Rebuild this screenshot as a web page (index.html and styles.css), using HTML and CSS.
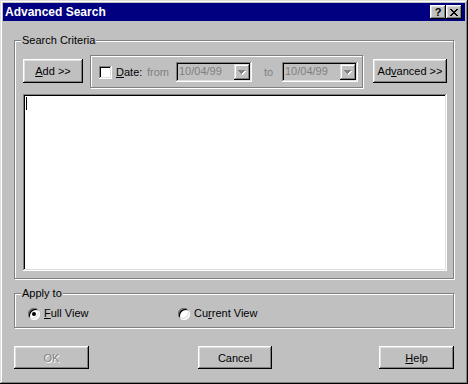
FILE: index.html
```html
<!DOCTYPE html>
<html lang="en">
<head>
    <meta charset="UTF-8">
    <title>Advanced Search</title>
    <link rel="stylesheet" href="styles.css">
</head>
<body>
    <div class="window" role="dialog" aria-label="Advanced Search">
        <!-- Title bar -->
        <div class="titlebar">
            <span class="title">Advanced Search</span>
            <div class="title-buttons">
                <button class="title-btn help-glyph">?</button>
                <button class="title-btn">
                    <svg width="8" height="7" viewBox="0 0 8 7" shape-rendering="crispEdges">
                        <path d="M0 0h2v1H0zM6 0h2v1H6zM1 1h2v1H1zM5 1h2v1H5zM2 2h4v1H2zM3 3h2v1H3zM2 4h4v1H2zM1 5h2v1H1zM5 5h2v1H5zM0 6h2v1H0zM6 6h2v1H6z" fill="#000"/>
                    </svg>
                </button>
            </div>
        </div>

        <div class="client">
            <!-- Search criteria -->
            <div class="group criteria">
                <span class="group-label">Search Criteria</span>
                <div class="criteria-row">
                    <button class="btn btn-add"><u>A</u>dd &gt;&gt;</button>
                    <div class="date-frame">
                        <span class="checkbox"></span>
                        <span class="date-label"><u>D</u>ate:</span>
                        <span class="muted from">from</span>
                        <div class="combo">
                            <span class="combo-text">10/04/99</span>
                            <span class="combo-btn">
                                <svg width="8" height="5" viewBox="0 0 8 5" shape-rendering="crispEdges">
                                    <path d="M1 1h7v1H1zM2 2h5v1H2zM3 3h3v1H3zM4 4h1v1H4z" fill="#fff"/>
                                    <path d="M0 0h7v1H0zM1 1h5v1H1zM2 2h3v1H2zM3 3h1v1H3z" fill="#808080"/>
                                </svg>
                            </span>
                        </div>
                        <span class="muted to">to</span>
                        <div class="combo">
                            <span class="combo-text">10/04/99</span>
                            <span class="combo-btn">
                                <svg width="8" height="5" viewBox="0 0 8 5" shape-rendering="crispEdges">
                                    <path d="M1 1h7v1H1zM2 2h5v1H2zM3 3h3v1H3zM4 4h1v1H4z" fill="#fff"/>
                                    <path d="M0 0h7v1H0zM1 1h5v1H1zM2 2h3v1H2zM3 3h1v1H3z" fill="#808080"/>
                                </svg>
                            </span>
                        </div>
                    </div>
                    <button class="btn btn-advanced">Ad<u>v</u>anced &gt;&gt;</button>
                </div>
                <div class="query-box"><span class="caret"></span></div>
            </div>

            <!-- Apply to -->
            <div class="group apply">
                <span class="group-label">Apply to</span>
                <div class="radio-row">
                    <label class="option"><span class="radio checked"></span><span><u>F</u>ull View</span></label>
                    <label class="option"><span class="radio"></span><span>Cu<u>r</u>rent View</span></label>
                </div>
            </div>

            <!-- Dialog buttons -->
            <div class="actions">
                <button class="btn btn-ok" disabled>OK</button>
                <button class="btn btn-cancel">Cancel</button>
                <button class="btn btn-help"><u>H</u>elp</button>
            </div>
        </div>
    </div>
</body>
</html>
```

FILE: styles.css
```css
/* Win98 palette */
:root {
    --face: #c0c0c0;
    --light: #dfdfdf;
    --highlight: #ffffff;
    --shadow: #808080;
    --dark: #000000;
    --title: #000080;
}

* {
    margin: 0;
    padding: 0;
    box-sizing: border-box;
}

body {
    font-family: "Liberation Sans", Arial, sans-serif;
    font-size: 11px;
    line-height: 13px;
    color: #000;
    background: var(--face);
}

u {
    text-decoration: underline;
    text-underline-offset: 1px;
}

/* Window frame */
.window {
    width: 468px;
    height: 384px;
    padding: 3px;
    background: var(--face);
    display: flex;
    flex-direction: column;
    box-shadow: inset -1px -1px var(--dark), inset 1px 1px var(--light),
                inset -2px -2px var(--shadow), inset 2px 2px var(--highlight);
}

.titlebar {
    height: 18px;
    background: var(--title);
    display: flex;
    align-items: center;
    justify-content: space-between;
    padding: 0 3px 0 2px;
}

.title {
    color: #fff;
    font-weight: bold;
    font-size: 12px;
}

.title-buttons {
    display: flex;
}

.title-btn {
    width: 16px;
    height: 14px;
    border: none;
    background: var(--face);
    display: flex;
    align-items: center;
    justify-content: center;
    font-family: "Liberation Sans", Arial, sans-serif;
    font-weight: bold;
    font-size: 11px;
    line-height: 11px;
    color: #000;
    box-shadow: inset -1px -1px var(--dark), inset 1px 1px var(--highlight),
                inset -2px -2px var(--shadow), inset 2px 2px var(--light);
}

.help-glyph {
    padding-top: 1px;
}

/* Client area */
.client {
    flex: 1;
    padding: 19px 11px 0 11px;
    display: flex;
    flex-direction: column;
}

.group {
    position: relative;
    border: 1px solid var(--shadow);
    box-shadow: inset 1px 1px var(--highlight), 1px 1px var(--highlight);
}

.group-label {
    position: absolute;
    top: -7px;
    left: 6px;
    padding: 0 1px;
    background: var(--face);
}

.criteria {
    height: 239px;
    padding: 14px 6px 7px 8px;
    display: flex;
    flex-direction: column;
}

.criteria-row {
    display: flex;
    align-items: flex-start;
    height: 33px;
}

/* Push buttons */
.btn {
    height: 23px;
    border: none;
    background: var(--face);
    font-family: "Liberation Sans", Arial, sans-serif;
    font-size: 11px;
    color: #000;
    box-shadow: inset -1px -1px var(--dark), inset 1px 1px var(--highlight),
                inset -2px -2px var(--shadow), inset 2px 2px var(--light);
}

.btn:disabled {
    color: var(--shadow);
    text-shadow: 1px 1px var(--highlight);
}

.btn-add {
    width: 60px;
    height: 24px;
    margin-top: 4px;
}

.btn-advanced {
    width: 74px;
    height: 24px;
    margin-top: 4px;
    margin-left: 10px;
}

/* Date frame */
.date-frame {
    width: 273px;
    height: 33px;
    margin-left: 7px;
    border: 1px solid var(--shadow);
    box-shadow: inset 1px 1px var(--highlight), 1px 1px var(--highlight);
    display: flex;
    align-items: center;
    padding: 1px 4px 0 8px;
}

.checkbox {
    width: 13px;
    height: 13px;
    background: #fff;
    box-shadow: inset -1px -1px var(--highlight), inset 1px 1px var(--shadow),
                inset -2px -2px var(--light), inset 2px 2px var(--dark);
}

.date-label {
    width: 31px;
    margin-left: 4px;
}

.muted {
    color: var(--shadow);
}

.from {
    width: 29px;
}

.to {
    width: 18px;
    margin-left: 12px;
}

.combo {
    width: 76px;
    height: 20px;
    margin-top: -1px;
    padding: 2px;
    display: flex;
    align-items: center;
    justify-content: space-between;
    background: var(--face);
    box-shadow: inset -1px -1px var(--highlight), inset 1px 1px var(--shadow),
                inset -2px -2px var(--light), inset 2px 2px var(--dark);
}

.combo-text {
    color: var(--shadow);
    padding-left: 1px;
}

.combo-btn {
    width: 16px;
    height: 16px;
    display: flex;
    align-items: center;
    justify-content: center;
    padding-top: 1px;
    box-shadow: inset -1px -1px var(--dark), inset 1px 1px var(--light),
                inset -2px -2px var(--shadow), inset 2px 2px var(--highlight);
}

/* Query text area */
.query-box {
    height: 177px;
    margin-top: 6px;
    padding: 3px;
    background: #fff;
    box-shadow: inset -1px -1px var(--highlight), inset 1px 1px var(--shadow),
                inset -2px -2px var(--light), inset 2px 2px var(--dark);
}

.caret {
    display: block;
    width: 1px;
    height: 13px;
    background: #000;
}

/* Apply to */
.apply {
    height: 35px;
    margin-top: 14px;
    padding: 13px 0 7px 13px;
}

.radio-row {
    display: flex;
    height: 13px;
}

.option {
    width: 150px;
    display: flex;
    align-items: center;
    gap: 4px;
}

.radio {
    position: relative;
    width: 12px;
    height: 12px;
    border-radius: 50%;
    background: #fff;
    box-shadow: inset -1px -1px var(--highlight), inset 1px 1px var(--shadow),
                inset -2px -2px var(--light), inset 2px 2px var(--dark);
}

.radio.checked::after {
    content: '';
    position: absolute;
    top: 4px;
    left: 4px;
    width: 4px;
    height: 4px;
    border-radius: 50%;
    background: #000;
}

/* Dialog buttons */
.actions {
    display: flex;
    margin-top: 18px;
}

.actions .btn {
    width: 75px;
}

.btn-cancel {
    margin-left: 109px;
}

.btn-help {
    margin-left: 107px;
}
```
